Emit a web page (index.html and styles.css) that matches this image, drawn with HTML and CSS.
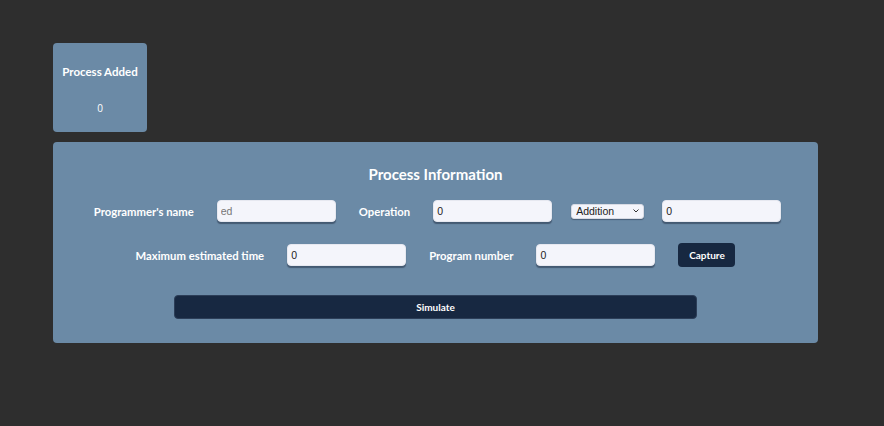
FILE: index.html
```html
<!DOCTYPE html>
<html>
<head>
<meta charset="utf-8">
<link rel="stylesheet" href="styles.css">
</head>
<body>
<div class="page">
  <div class="counter">
    <div class="counter-title">Process Added</div>
    <div class="counter-value">0</div>
  </div>
  <div class="panel">
    <h2 class="panel-title">Process Information</h2>
    <div class="row row1">
      <label class="lbl">Programmer's name</label>
      <input class="field" type="text" placeholder="ed">
      <label class="lbl">Operation</label>
      <input class="field" type="text" value="0">
      <div class="sel-wrap">
        <select class="sel"><option>Addition</option></select>
        <svg class="chev" width="6" height="4" viewBox="0 0 6 4"><path d="M0.5 0.5 L3 3 L5.5 0.5" fill="none" stroke="#333" stroke-width="1"/></svg>
      </div>
      <input class="field" type="text" value="0">
    </div>
    <div class="row row2">
      <label class="lbl">Maximum estimated time</label>
      <input class="field" type="text" value="0">
      <label class="lbl">Program number</label>
      <input class="field" type="text" value="0">
      <button class="btn capture">Capture</button>
    </div>
    <div class="sim-wrap">
      <button class="btn simulate">Simulate</button>
    </div>
  </div>
</div>
</body>
</html>
```
FILE: styles.css
```css
html, body {
  margin: 0;
  padding: 0;
  background: #2e2e2e;
  font-family: Lato, "Open Sans", sans-serif;
}
.page {
  padding: 43px 0 0 53px;
  width: 765px;
}
.counter {
  width: 94px;
  height: 89px;
  background: #6b8aa6;
  border-radius: 4px;
  color: #fff;
  display: flex;
  flex-direction: column;
  align-items: center;
  box-sizing: border-box;
  padding-top: 21px;
}
.counter-title {
  font-weight: 700;
  font-size: 11.5px;
  line-height: 16px;
}
.counter-value {
  font-family: "Open Sans", sans-serif;
  font-size: 10px;
  margin-top: 21px;
  line-height: 14px;
}
.panel {
  margin-top: 10px;
  background: #6b8aa6;
  border-radius: 4px;
  height: 201px;
  box-sizing: border-box;
  padding-top: 22px;
  display: flex;
  flex-direction: column;
  align-items: center;
}
.panel-title {
  margin: 0;
  color: #fff;
  font-size: 15px;
  font-weight: 700;
  line-height: 20px;
}
.row {
  display: flex;
  align-items: center;
  gap: 23px;
  margin-top: 16px;
}
.row1 { margin-left: 4px; }
.row2 { margin-top: 21px; }
.lbl {
  color: #fff;
  font-weight: 700;
  font-size: 11.3px;
}
.field {
  width: 119px;
  height: 22px;
  box-sizing: border-box;
  border: 1px solid #e6e8f0;
  border-radius: 4px;
  background: #f4f5fb;
  box-shadow: 0 2px 1px rgba(20, 30, 50, 0.45);
  padding: 0 3px;
  font-family: "Liberation Sans", Arial, sans-serif;
  font-size: 10.5px;
  color: #222;
  outline: none;
}
.field::placeholder { color: #777; }
.sel-wrap {
  display: flex;
  align-items: center;
  margin: 0 0 0 -4px;
}
.sel {
  -webkit-appearance: none;
  appearance: none;
  width: 73px;
  height: 15px;
  box-sizing: border-box;
  border: 1px solid #d8dbe4;
  border-radius: 3px;
  background: #f4f5fb;
  font-family: "Liberation Sans", Arial, sans-serif;
  font-size: 10.5px;
  line-height: 13px;
  color: #222;
  padding: 0 0 0 4px;
  box-shadow: 0 1px 1px rgba(20, 30, 50, 0.4);
  outline: none;
}
.chev {
  margin-left: -11px;
  pointer-events: none;
}
.btn {
  background: #172841;
  color: #fff;
  border: none;
  border-radius: 4px;
  font-family: Lato, "Open Sans", sans-serif;
  font-weight: 700;
  font-size: 10px;
}
.capture {
  width: 57px;
  height: 24px;
}
.sim-wrap {
  margin-top: 28px;
}
.simulate {
  width: 523px;
  height: 24px;
  border: 1px solid #2c3e58;
}
```
